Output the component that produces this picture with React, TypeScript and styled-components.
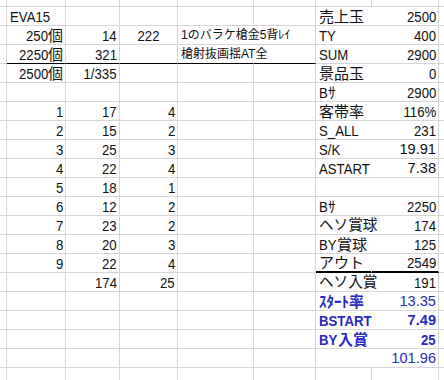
import React from "react";
import styled, { createGlobalStyle, css } from "styled-components";

const GlobalStyle = createGlobalStyle`
  html, body {
    margin: 0;
    padding: 0;
    background: #ffffff;
    overflow: hidden;
  }
`;

const COLS = [7, 59, 54, 58, 76, 62, 56, 67, 20];

const Sheet = styled.div`
  display: grid;
  grid-template-columns: ${COLS.map((w) => `${w}px`).join(" ")};
  grid-template-rows: 7px repeat(20, 19px);
  width: 444px;
  height: 380px;
  overflow: hidden;
  font-family: "Liberation Sans", "Noto Sans CJK JP", sans-serif;
  font-size: 15px;
  color: #111111;
  background: #ffffff;
`;

type Align = "left" | "right" | "center";

const Cell = styled.div<{
  $align?: Align;
  $small?: boolean;
  $blue?: boolean;
  $bold?: boolean;
  $wide?: boolean;
  $noRight?: boolean;
  $rule?: "thin" | "thick";
  $overflow?: boolean;
}>`
  box-sizing: border-box;
  min-width: 0;
  display: flex;
  align-items: flex-end;
  justify-content: ${(p) =>
    p.$align === "right" ? "flex-end" : p.$align === "center" ? "center" : "flex-start"};
  padding: 0 2px 1px 3px;
  border-right: 1px solid ${(p) => (p.$noRight ? "transparent" : "#d6d6d6")};
  border-bottom: 1px solid #d6d6d6;
  white-space: nowrap;
  line-height: 15px;
  overflow: ${(p) => (p.$overflow ? "visible" : "hidden")};
  font-size: ${(p) => (p.$small ? "12px" : p.$wide ? "14.6px" : "15px")};
  color: ${(p) => (p.$blue ? "#2a2ac0" : "#111111")};
  font-weight: ${(p) => (p.$bold ? 700 : 400)};
  ${(p) =>
    p.$rule === "thin" &&
    css`
      border-bottom: 1px solid #000000;
    `}
  ${(p) =>
    p.$rule === "thick" &&
    css`
      border-bottom: 2px solid #000000;
    `}
`;

/* Latin runs are drawn condensed, like the narrow half-width face of the sheet */
const Latin = styled.span<{ $origin: Align; $trim: number }>`
  display: inline-block;
  transform: scaleX(0.88);
  transform-origin: ${(p) => p.$origin} bottom;
  margin-left: ${(p) =>
    p.$origin === "right" ? -p.$trim : p.$origin === "center" ? -p.$trim / 2 : 0}em;
  margin-right: ${(p) =>
    p.$origin === "left" ? -p.$trim : p.$origin === "center" ? -p.$trim / 2 : 0}em;
`;

const EdgeCell = styled.div`
  box-sizing: border-box;
  border-right: 1px solid #d6d6d6;
  border-bottom: 1px solid #d6d6d6;
`;

type CellDef = {
  t?: string;
  a?: Align;
  small?: boolean;
  blue?: boolean;
  bold?: boolean;
  wide?: boolean;
};

type RowDef = {
  cells: (CellDef | null)[]; // columns A..G
  ruleLeft?: boolean; // black line under A..E
  ruleRight?: boolean; // thick black line under F..G
  inBlock?: boolean;
};

const r = (t: string): CellDef => ({ t, a: "right" });
const l = (t: string): CellDef => ({ t, a: "left" });
const dec = (t: string, extra: Partial<CellDef> = {}): CellDef => ({
  t,
  a: "right",
  wide: true,
  ...extra,
});

const ROWS: RowDef[] = [
  { cells: [l("EVA15"), null, null, null, null, l("売上玉"), r("2500")], inBlock: true },
  {
    cells: [
      r("250個"),
      r("14"),
      { t: "222", a: "center" },
      { t: "1のバラケ槍金5背ﾚｲ", a: "left", small: true },
      null,
      l("TY"),
      r("400"),
    ],
    inBlock: true,
  },
  {
    cells: [
      r("2250個"),
      r("321"),
      null,
      { t: "槍射抜画揺AT全", a: "left", small: true },
      null,
      l("SUM"),
      r("2900"),
    ],
    ruleLeft: true,
    inBlock: true,
  },
  { cells: [r("2500個"), r("1/335"), null, null, null, l("景品玉"), r("0")], inBlock: true },
  { cells: [null, null, null, null, null, l("Bｻ"), r("2900")], inBlock: true },
  { cells: [r("1"), r("17"), r("4"), null, null, l("客帯率"), r("116%")], inBlock: true },
  { cells: [r("2"), r("15"), r("2"), null, null, l("S_ALL"), r("231")], inBlock: true },
  { cells: [r("3"), r("25"), r("3"), null, null, l("S/K"), dec("19.91")], inBlock: true },
  { cells: [r("4"), r("22"), r("4"), null, null, l("ASTART"), dec("7.38")], inBlock: true },
  { cells: [r("5"), r("18"), r("1"), null, null, null, null], inBlock: true },
  { cells: [r("6"), r("12"), r("2"), null, null, l("Bｻ"), r("2250")], inBlock: true },
  {
    cells: [r("7"), r("23"), r("2"), null, null, { t: "ヘソ賞球", a: "left", wide: true }, r("174")],
    inBlock: true,
  },
  { cells: [r("8"), r("20"), r("3"), null, null, l("BY賞球"), r("125")], inBlock: true },
  {
    cells: [r("9"), r("22"), r("4"), null, null, l("アウト"), r("2549")],
    ruleRight: true,
    inBlock: true,
  },
  {
    cells: [null, r("174"), r("25"), null, null, { t: "ヘソ入賞", a: "left", wide: true }, r("191")],
    inBlock: true,
  },
  {
    cells: [
      null,
      null,
      null,
      null,
      null,
      { t: "ｽﾀｰﾄ率", a: "left", blue: true, bold: true },
      dec("13.35", { blue: true }),
    ],
    inBlock: true,
  },
  {
    cells: [
      null,
      null,
      null,
      null,
      null,
      { t: "BSTART", a: "left", blue: true, bold: true },
      dec("7.49", { blue: true, bold: true }),
    ],
    inBlock: true,
  },
  {
    cells: [
      null,
      null,
      null,
      null,
      null,
      { t: "BY入賞", a: "left", blue: true, bold: true },
      { t: "25", a: "right", blue: true, bold: true },
    ],
    inBlock: true,
  },
  {
    cells: [null, null, null, null, null, null, dec("101.96", { blue: true })],
    inBlock: true,
  },
  { cells: [null, null, null, null, null, null, null] },
];

function CellText({ c }: { c: CellDef }) {
  const text = c.t ?? "";
  if (c.wide || c.small) return <>{text}</>;
  const origin: Align = c.a ?? "left";
  const runs = text.match(/[\x20-\x7E]+|[^\x20-\x7E]+/g) ?? [];
  return (
    <>
      {runs.map((run, i) =>
        /^[\x20-\x7E]+$/.test(run) ? (
          <Latin key={i} $origin={origin} $trim={run.length * 0.066}>
            {run}
          </Latin>
        ) : (
          <span key={i}>{run}</span>
        )
      )}
    </>
  );
}

function SheetRow({ row }: { row: RowDef }) {
  return (
    <>
      <EdgeCell />
      {row.cells.map((c, i) => {
        const spillsD = i === 3 && !!c?.small;
        const labelCol = i === 5 && !!row.inBlock;
        const rule: "thin" | "thick" | undefined =
          row.ruleLeft && i <= 4 ? "thin" : row.ruleRight && i >= 5 ? "thick" : undefined;
        return (
          <Cell
            key={i}
            $align={c?.a}
            $small={c?.small}
            $blue={c?.blue}
            $bold={c?.bold}
            $wide={c?.wide}
            $overflow={spillsD || labelCol}
            $noRight={spillsD || labelCol}
            $rule={rule}
          >
            {c && <CellText c={c} />}
          </Cell>
        );
      })}
      <EdgeCell />
    </>
  );
}

export default function App() {
  return (
    <>
      <GlobalStyle />
      <Sheet>
        {COLS.map((_, i) => (
          <EdgeCell key={i} />
        ))}
        {ROWS.map((row, i) => (
          <SheetRow key={i} row={row} />
        ))}
      </Sheet>
    </>
  );
}
